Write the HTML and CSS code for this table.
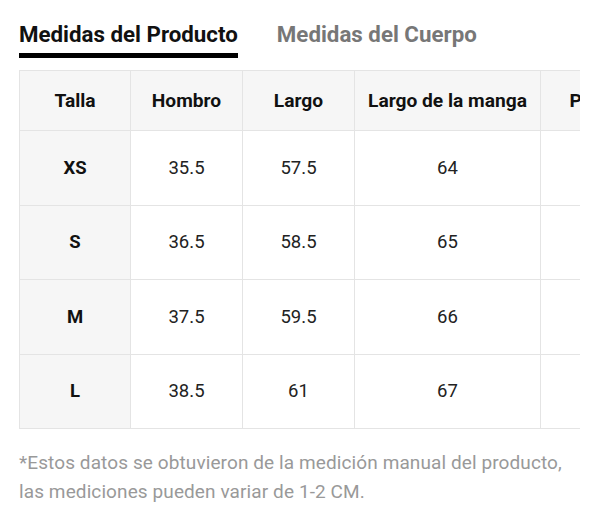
FILE: index.html
```html
<!DOCTYPE html>
<html lang="es">
<head>
<meta charset="utf-8">
<title>Medidas</title>
<link rel="stylesheet" href="styles.css">
</head>
<body>
<div class="page">
  <div class="tabs">
    <div class="tab active">Medidas del Producto</div>
    <div class="tab">Medidas del Cuerpo</div>
  </div>
  <div class="table-wrap">
    <table class="sizes">
      <colgroup>
        <col class="c1"><col class="c2"><col class="c3"><col class="c4"><col class="c5">
      </colgroup>
      <thead>
        <tr><th>Talla</th><th>Hombro</th><th>Largo</th><th>Largo de la manga</th><th>Pecho</th></tr>
      </thead>
      <tbody>
        <tr><th>XS</th><td>35.5</td><td>57.5</td><td>64</td><td>84</td></tr>
        <tr><th>S</th><td>36.5</td><td>58.5</td><td>65</td><td>88</td></tr>
        <tr><th>M</th><td>37.5</td><td>59.5</td><td>66</td><td>92</td></tr>
        <tr><th>L</th><td>38.5</td><td>61</td><td>67</td><td>98</td></tr>
      </tbody>
    </table>
  </div>
  <p class="note">*Estos datos se obtuvieron de la medición manual del producto, las mediciones pueden variar de 1-2 CM.</p>
</div>
</body>
</html>
```
FILE: styles.css
```css
* { box-sizing: border-box; }
html, body { margin: 0; padding: 0; background: #fff; }
body { font-family: Roboto, "Noto Sans", Arial, sans-serif; color: #222; }
.page { padding: 19px 20px 0 19px; width: 600px; }
.tabs { display: flex; gap: 39px; height: 51px; }
.tab {
  font-size: 22.3px; font-weight: 700; color: #777;
  line-height: 28px; padding-top: 1px; height: 39px;
}
.tab.active { color: #111; border-bottom: 5px solid #000; }
.table-wrap { width: 561px; overflow: hidden; }
.sizes {
  border-collapse: collapse; table-layout: fixed; width: 633px;
}
.c1 { width: 111px; } .c2 { width: 112px; } .c3 { width: 112px; }
.c4 { width: 186px; } .c5 { width: 112px; }
.sizes th, .sizes td {
  border: 1px solid #e4e4e4; text-align: center; vertical-align: middle;
  padding: 0;
}
.sizes thead th {
  height: 60px; background: #f6f6f6; font-size: 19.2px; font-weight: 700; color: #111;
}
.sizes tbody th {
  height: 74.5px; background: #f6f6f6; font-size: 18.5px; font-weight: 700; color: #111;
}
.sizes tbody td { font-size: 18.5px; font-weight: 400; color: #222; }
.note {
  margin: 19px 0 0; font-size: 19px; line-height: 29px; color: #999; width: 562px;
  letter-spacing: 0.1px;
}
```
